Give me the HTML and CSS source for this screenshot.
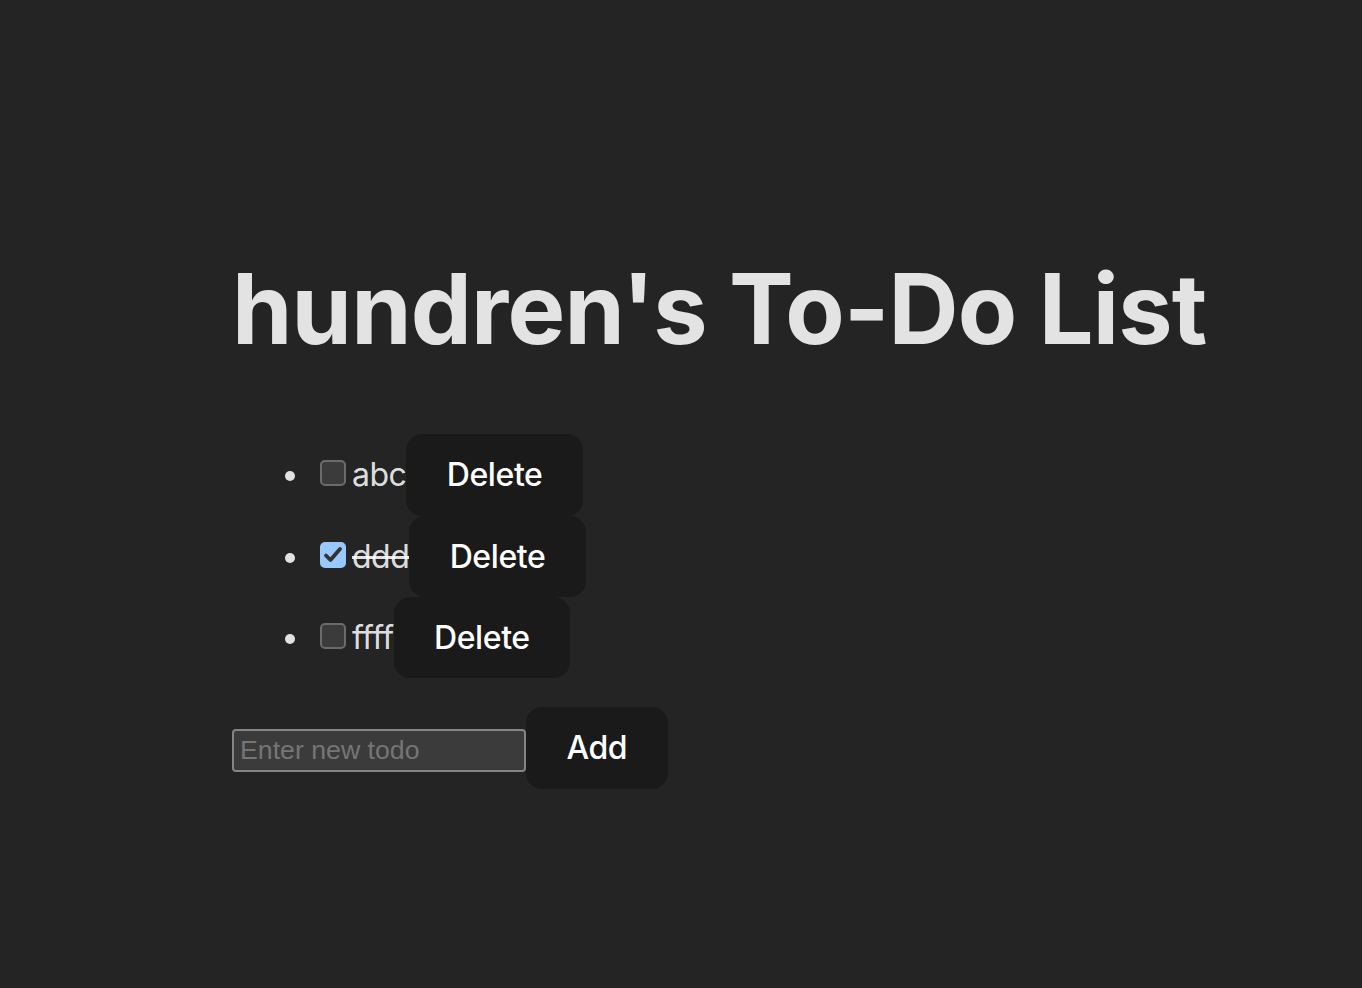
FILE: index.html
```html
<!DOCTYPE html>
<html lang="en">
<head>
<meta charset="utf-8">
<title>hundren's To-Do List</title>
<link rel="stylesheet" href="styles.css">
</head>
<body>
<div class="app">
<h1 class="title">hundren's To-Do List</h1>
<ul class="todos">
<li class="todo"><label class="item"><span class="box"></span><span class="text">abc</span></label><button class="btn">Delete</button></li>
<li class="todo"><label class="item"><span class="box box-checked"><svg viewBox="0 0 26 26" width="26" height="26"><path d="M6 13.5 L10.5 18 L20 7" fill="none" stroke="#333333" stroke-width="3.8" stroke-linecap="round" stroke-linejoin="round"/></svg></span><span class="text done">ddd</span></label><button class="btn">Delete</button></li>
<li class="todo"><label class="item"><span class="box"></span><span class="text">ffff</span></label><button class="btn">Delete</button></li>
</ul>
<form class="add-form"><input class="field" type="text" placeholder="Enter new todo"><button class="btn" type="button">Add</button></form>
</div>
</body>
</html>
```
FILE: styles.css
```css
html {
  background: #242424;
}
body {
  margin: 0;
  min-height: 100vh;
  display: flex;
  align-items: center;
  font-family: Inter, "Noto Sans", sans-serif;
  font-size: 32px;
  line-height: 1.5;
  letter-spacing: -0.5px;
  color: rgba(255, 255, 255, 0.87);
  background: #242424;
}
.app {
  width: 898px;
  margin: 0 auto;
  padding-bottom: 17px;
}
.title {
  font-size: 97px;
  line-height: 112.6px;
  font-weight: 700;
  letter-spacing: -0.8px;
  margin: 70.6px 0 68.6px;
  white-space: nowrap;
  color: #e3e3e3;
}
.todos {
  margin: 32px 0 29px;
  padding-left: 80px;
}
.todo {
  white-space: nowrap;
}
.item {
  display: inline;
}
.box {
  display: inline-block;
  box-sizing: border-box;
  width: 26px;
  height: 26px;
  margin: 0 6px 0 8px;
  border: 2px solid #6b6b6b;
  border-radius: 5px;
  background: #3b3b3b;
  vertical-align: 0;
}
.box-checked {
  background: #99c8ff;
  border: none;
}
.box-checked svg {
  display: block;
}
.text.done {
  text-decoration: line-through;
}
.btn {
  display: inline-block;
  border-radius: 16px;
  border: 2px solid transparent;
  padding: 19.2px 38.4px;
  font-size: 32px;
  font-weight: 500;
  font-family: inherit;
  letter-spacing: -0.4px;
  line-height: normal;
  background: #1a1a1a;
  color: #ffffff;
  cursor: pointer;
}
.add-form {
  margin: 0;
  white-space: nowrap;
}
.field {
  box-sizing: border-box;
  width: 294px;
  height: 43px;
  padding: 2px 6px;
  border: 2px solid #858585;
  border-radius: 4px;
  background: #3b3b3b;
  color: #ffffff;
  font-family: "Liberation Sans", Arial, sans-serif;
  font-size: 26.7px;
  letter-spacing: 0;
  vertical-align: baseline;
}
.field::placeholder {
  color: #757575;
}
```
